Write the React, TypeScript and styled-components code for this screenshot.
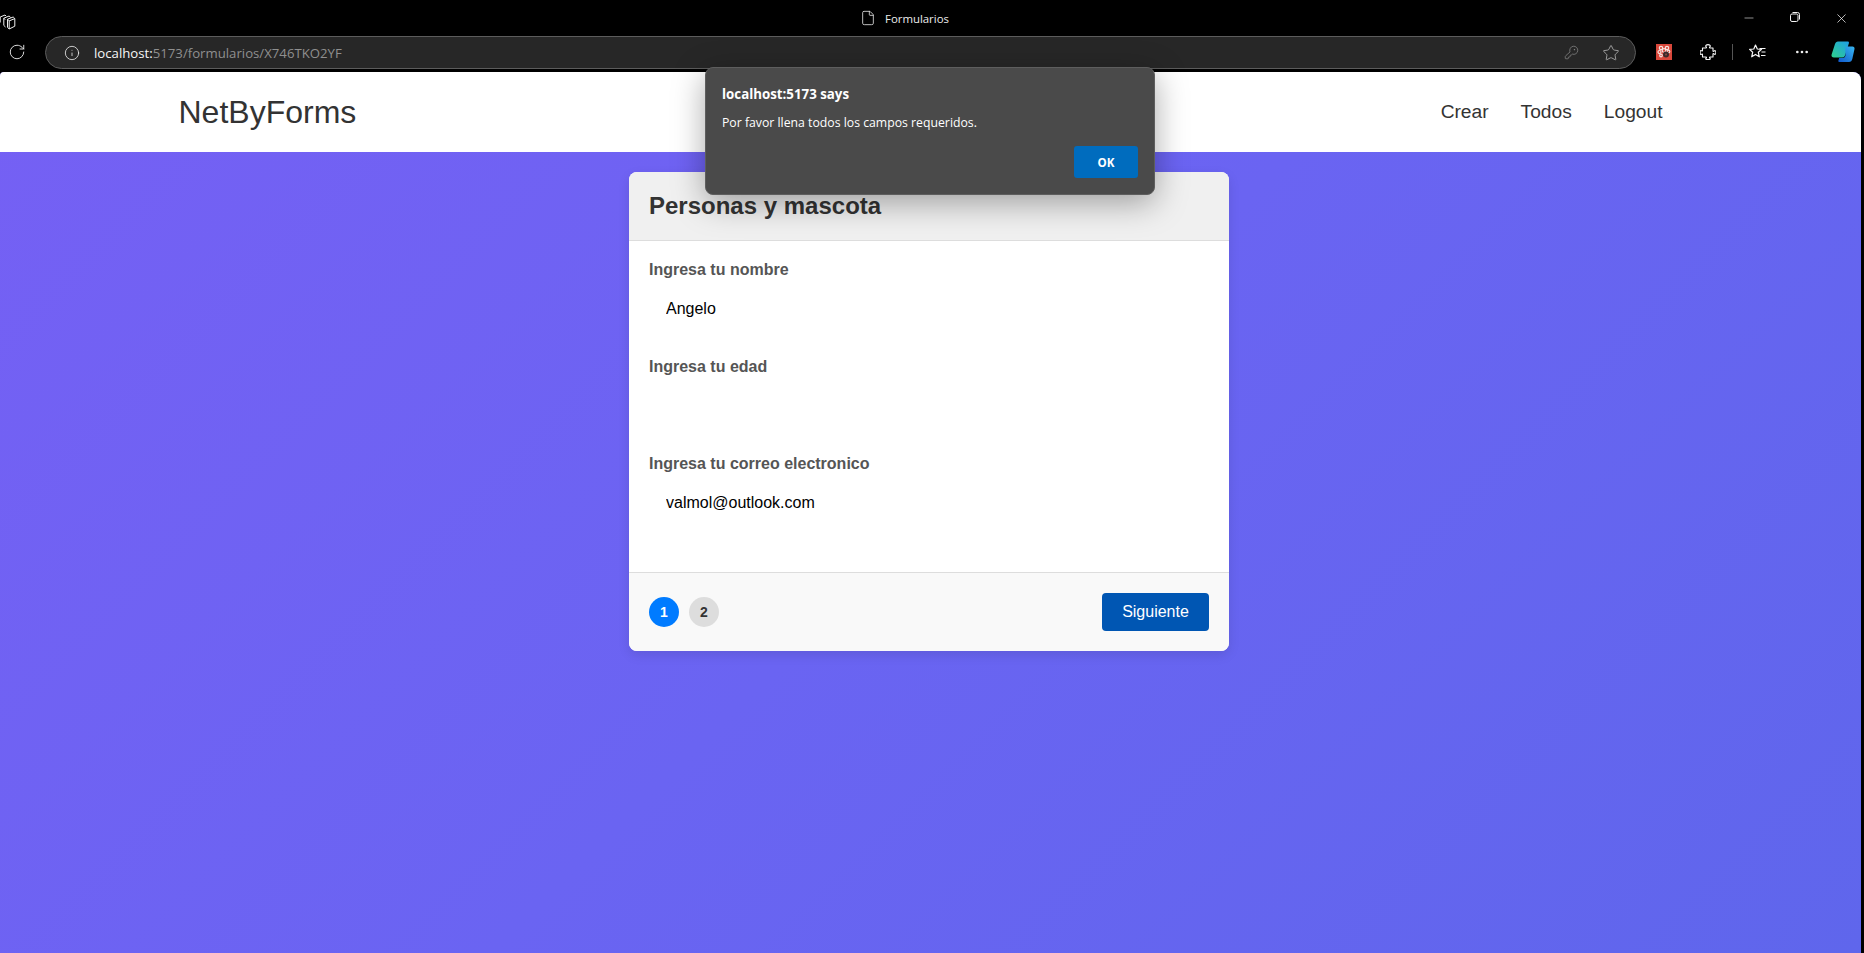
import React from "react";
import styled, { createGlobalStyle } from "styled-components";
import { RotateCw, Info, KeyRound, Star, Minus, X, File, MoreHorizontal } from "lucide-react";

const Global = createGlobalStyle`
  html, body { margin: 0; padding: 0; height: 100%; background: #000; overflow: hidden; }
  #root { height: 100%; }
  * { box-sizing: border-box; }
`;

const Shell = styled.div`
  position: relative;
  width: 1864px;
  height: 953px;
  display: flex;
  flex-direction: column;
  background: #000;
  font-family: "Liberation Sans", Arial, sans-serif;
`;

const TitleBar = styled.div`
  height: 36px;
  display: flex;
  align-items: center;
  color: #fff;
`;

const WorkspaceSlot = styled.div`
  width: 860px;
  display: flex;
  align-items: center;
  color: #f0f0f0;
`;

const TabTitle = styled.div`
  flex: 1;
  display: flex;
  align-items: center;
  gap: 9px;
  font: 11.4px "Open Sans", "Noto Sans", sans-serif;
  color: #ececec;
`;

const WindowButton = styled.div`
  width: 46px;
  display: flex;
  justify-content: center;
  color: #f4f4f4;
`;

const WindowControls = styled.div`
  display: flex;
`;

const Toolbar = styled.div`
  height: 36px;
  display: flex;
  align-items: flex-start;
  color: #f0f0f0;
`;

const ReloadSlot = styled.div`
  width: 45px;
  height: 32px;
  padding-left: 8px;
  display: flex;
  align-items: center;
`;

const AddressBar = styled.div`
  width: 1591px;
  height: 33px;
  border: 1px solid #5c5c5c;
  border-radius: 17px;
  background: #272727;
  display: flex;
  align-items: center;
  padding: 0 5px 0 18px;
  font: 13.2px "Open Sans", "Noto Sans", sans-serif;
`;

const UrlHost = styled.span`
  margin-left: 14px;
  color: #f6f6f6;
`;

const UrlPath = styled.span`
  color: #8f8f8f;
  flex: 1;
`;

const AddressIcon = styled.div`
  width: 42px;
  display: flex;
  justify-content: center;
  color: #8f8f8f;
`;

const StarIcon = styled(AddressIcon)`
  width: 38px;
  color: #b4b4b4;
`;

const ToolSlots = styled.div`
  display: flex;
  align-items: center;
  height: 32px;
  margin-left: 6px;
`;

const ToolSlot = styled.div<{ $w?: number }>`
  width: ${(p) => p.$w ?? 44}px;
  display: flex;
  justify-content: center;
  align-items: center;
`;

const ToolDivider = styled.div`
  width: 1px;
  height: 16px;
  background: #555;
  margin: 0 2px;
`;

const Viewport = styled.div`
  flex: 1;
  margin-right: 3px;
  display: flex;
  flex-direction: column;
  border-radius: 4px 8px 0 0;
  overflow: hidden;
  background: linear-gradient(135deg, #7560f4 0%, #6a64f2 50%, #5f66ec 100%);
`;

const Navbar = styled.nav`
  height: 80px;
  background: #fff;
  display: flex;
  align-items: center;
  justify-content: space-between;
  padding: 0 198.5px 0 178.5px;
  color: #333;
`;

const Brand = styled.div`
  font-size: 32px;
  line-height: 37px;
`;

const NavLinks = styled.div`
  display: flex;
  gap: 32px;
`;

const NavLink = styled.a`
  font-size: 19.2px;
  color: #333;
`;

const Main = styled.main`
  flex: 1;
  padding-top: 20px;
  display: flex;
  justify-content: center;
  padding-right: 3px;
`;

const Card = styled.section`
  width: 600px;
  height: 479px;
  background: #fff;
  border-radius: 8px;
  box-shadow: 0 4px 12px rgba(0, 0, 0, 0.1);
  overflow: hidden;
  display: flex;
  flex-direction: column;
`;

const CardHeader = styled.header`
  height: 69px;
  background: #f0f0f0;
  border-bottom: 1px solid #ddd;
  padding: 0 20px;
  display: flex;
  align-items: center;
`;

const CardTitle = styled.h2`
  margin: 0;
  font-size: 24px;
  font-weight: 700;
  color: #333;
`;

const CardBody = styled.div`
  flex: 1;
  padding: 20px 20px 0;
`;

const Field = styled.div`
  height: 97px;
`;

const FieldLabel = styled.label`
  display: block;
  font-size: 16px;
  line-height: 18px;
  font-weight: 700;
  color: #555;
`;

const FieldInput = styled.input`
  display: block;
  width: 100%;
  margin-top: 11px;
  height: 38px;
  border: 0;
  outline: 0;
  background: transparent;
  padding: 0 17px;
  font: 16px "Liberation Sans", Arial, sans-serif;
  color: #000;
`;

const CardFooter = styled.footer`
  height: 79px;
  background: #f9f9f9;
  border-top: 1px solid #ddd;
  padding: 0 20px;
  display: flex;
  align-items: center;
  justify-content: space-between;
`;

const Steps = styled.div`
  display: flex;
  gap: 10px;
`;

const Step = styled.div<{ $active?: boolean }>`
  width: 30px;
  height: 30px;
  border-radius: 50%;
  display: flex;
  align-items: center;
  justify-content: center;
  font-size: 14px;
  font-weight: 700;
  background: ${(p) => (p.$active ? "#007bff" : "#ddd")};
  color: ${(p) => (p.$active ? "#fff" : "#333")};
`;

const NextButton = styled.button`
  width: 107px;
  height: 38px;
  border: 0;
  border-radius: 4px;
  background: #0056b3;
  color: #fff;
  font: 16px "Liberation Sans", Arial, sans-serif;
`;

const Dialog = styled.div`
  position: absolute;
  left: 705px;
  top: 67px;
  width: 450px;
  height: 128px;
  background: #4a4a4a;
  border: 1px solid #5e5e5e;
  border-radius: 8px;
  box-shadow: 0 8px 32px rgba(0, 0, 0, 0.34);
  padding: 17px 16px 0;
  color: #fff;
  font-family: "Open Sans", "Noto Sans", sans-serif;
  display: flex;
  flex-direction: column;
`;

const DialogTitle = styled.div`
  font-size: 13.3px;
  line-height: 18px;
  font-weight: 700;
`;

const DialogText = styled.div`
  margin-top: 11px;
  font-size: 12.25px;
  line-height: 18px;
`;

const DialogActions = styled.div`
  margin-top: 14px;
  display: flex;
  justify-content: flex-end;
`;

const DialogButton = styled.button`
  width: 64px;
  height: 32px;
  border: 0;
  border-radius: 3px;
  background: #006cbe;
  color: #fff;
  font: 700 11.6px "Open Sans", "Noto Sans", sans-serif;
`;

const WorkspaceIcon = () => (
  <svg width="16" height="24" viewBox="0 0 16 24" fill="none" stroke="currentColor" strokeWidth="1" strokeLinejoin="round">
    <path d="M7.5 13.2L13.2 11l1.6 1.6v7.6L9.2 23 7.5 21.3z" />
    <path d="M7.5 13.2l1.7 1.7 5.6-2.3M9.2 14.9V23" />
    <path d="M10.5 11.5L9.2 10 3.8 12.2v7.2L5.5 21" />
    <path d="M5.2 13.7L3.8 12.2M6.2 10.2L5 9 .2 11v5.5" />
  </svg>
);

const RestoreIcon = () => (
  <svg width="12" height="12" viewBox="0 0 12 12" fill="none" stroke="currentColor" strokeWidth="1">
    <rect x="1.5" y="3" width="7.5" height="7.5" rx="1.5" />
    <path d="M3.5 1.5h5a2 2 0 0 1 2 2v5" />
  </svg>
);

const PuzzleIcon = () => (
  <svg width="16" height="16" viewBox="0 0 16 16" fill="none" stroke="#f4f4f4" strokeWidth="1.1" strokeLinejoin="round">
    <path d="M2.5 4H6C6.6 4 6.6 3.4 6.2 3 5 1.6 6.2.6 8 .6s3 1 1.8 2.4C9.4 3.4 9.4 4 10 4h3v3c0 .6.6.6 1 .2 1.2-1.2 1.9-.2 1.9 1.3s-.7 2.5-1.9 1.3c-.4-.4-1-.4-1 .2v3h-3c-.6 0-.6.6-.2 1C11 15.2 9.8 15.6 8 15.6s-3-.4-1.8-1.6c.4-.4.4-1-.2-1H2.5v-2.5c0-.6-.6-.6-1-.2C.6 11 .1 10 .1 8.5S.6 6 1.5 6.7c.4.4 1 .4 1-.2z" />
  </svg>
);

const FavoritesIcon = () => (
  <svg width="18" height="16" viewBox="0 0 18 16" fill="none" stroke="#f6f6f6" strokeWidth="1.2" strokeLinejoin="round">
    <path d="M6.5 1l1.8 4 4.2.4-3.2 2.8 1 4.6-3.8-2.4-3.8 2.4 1-4.6L.6 5.4l4.2-.4z" />
    <path d="M10.5 4.5h6M12.5 8h4M12 11.5h4.5" />
  </svg>
);

const ExtensionLogo = () => (
  <svg width="16" height="16" viewBox="0 0 16 16">
    <rect width="16" height="16" fill="#d9483b" />
    <g fill="none" stroke="#f6e4e0" strokeWidth="1.2">
      <circle cx="5" cy="4" r="1.7" />
      <circle cx="11" cy="4" r="1.7" />
      <circle cx="3.5" cy="8" r="1.5" />
      <circle cx="8" cy="6.5" r="1.8" />
      <circle cx="12.5" cy="7.5" r="1.3" />
      <circle cx="5" cy="11.5" r="1.3" />
    </g>
    <circle cx="10" cy="10.5" r="3" fill="#3c2a2a" />
    <circle cx="10" cy="10.5" r="1" fill="#8c4a44" />
  </svg>
);

const CopilotLogo = () => (
  <svg width="24" height="24" viewBox="0 0 24 24">
    <defs>
      <linearGradient id="cpA" x1="0" y1="1" x2="1" y2="0">
        <stop offset="0" stopColor="#2fd08a" />
        <stop offset="1" stopColor="#1f9fe8" />
      </linearGradient>
      <linearGradient id="cpB" x1="0" y1="1" x2="1" y2="0">
        <stop offset="0" stopColor="#1058cc" />
        <stop offset="1" stopColor="#37b6f0" />
      </linearGradient>
    </defs>
    <path d="M7 1.5h9.5c1.2 0 1.7.7 1.4 1.7L14 15.5c-.4 1.3-1.3 2-2.6 2H3c-1.8 0-2.9-1.3-2.4-3L4 4c.5-1.6 1.5-2.5 3-2.5z" fill="url(#cpA)" />
    <path d="M14.5 6.5h7c1.4 0 2.3 1.1 2 2.4l-2.2 10.2c-.4 1.8-1.6 3-3.3 3H8.5c-1 0-1.4-.8-1.1-1.6l.8-2.5h3.2c1.5 0 2.6-.8 3-2.2z" fill="url(#cpB)" />
  </svg>
);

export default function App() {
  return (
    <Shell>
      <Global />
      <TitleBar>
        <WorkspaceSlot>
          <WorkspaceIcon />
        </WorkspaceSlot>
        <TabTitle>
          <File size={16} strokeWidth={1.2} />
          <span>Formularios</span>
        </TabTitle>
        <WindowControls>
          <WindowButton><Minus size={14} strokeWidth={1} /></WindowButton>
          <WindowButton><RestoreIcon /></WindowButton>
          <WindowButton><X size={15} strokeWidth={1.2} /></WindowButton>
        </WindowControls>
      </TitleBar>
      <Toolbar>
        <ReloadSlot><RotateCw size={18} strokeWidth={1.2} /></ReloadSlot>
        <AddressBar>
          <Info size={16} strokeWidth={1.2} color="#f0f0f0" />
          <UrlHost>localhost:</UrlHost>
          <UrlPath>5173/formularios/X746TKO2YF</UrlPath>
          <AddressIcon><KeyRound size={15} strokeWidth={1.1} /></AddressIcon>
          <StarIcon><Star size={18} strokeWidth={1.1} /></StarIcon>
        </AddressBar>
        <ToolSlots>
          <ToolSlot><ExtensionLogo /></ToolSlot>
          <ToolSlot><PuzzleIcon /></ToolSlot>
          <ToolDivider />
          <ToolSlot $w={46}><FavoritesIcon /></ToolSlot>
          <ToolSlot $w={42}><MoreHorizontal size={16} strokeWidth={2} /></ToolSlot>
          <ToolSlot $w={40}><CopilotLogo /></ToolSlot>
        </ToolSlots>
      </Toolbar>
      <Viewport>
        <Navbar>
          <Brand>NetByForms</Brand>
          <NavLinks>
            <NavLink>Crear</NavLink>
            <NavLink>Todos</NavLink>
            <NavLink>Logout</NavLink>
          </NavLinks>
        </Navbar>
        <Main>
          <Card>
            <CardHeader>
              <CardTitle>Personas y mascota</CardTitle>
            </CardHeader>
            <CardBody>
              <Field>
                <FieldLabel>Ingresa tu nombre</FieldLabel>
                <FieldInput readOnly value="Angelo" />
              </Field>
              <Field>
                <FieldLabel>Ingresa tu edad</FieldLabel>
                <FieldInput readOnly value="" />
              </Field>
              <Field>
                <FieldLabel>Ingresa tu correo electronico</FieldLabel>
                <FieldInput readOnly value="valmol@outlook.com" />
              </Field>
            </CardBody>
            <CardFooter>
              <Steps>
                <Step $active>1</Step>
                <Step>2</Step>
              </Steps>
              <NextButton>Siguiente</NextButton>
            </CardFooter>
          </Card>
        </Main>
      </Viewport>
      <Dialog>
        <DialogTitle>localhost:5173 says</DialogTitle>
        <DialogText>Por favor llena todos los campos requeridos.</DialogText>
        <DialogActions>
          <DialogButton>OK</DialogButton>
        </DialogActions>
      </Dialog>
    </Shell>
  );
}
